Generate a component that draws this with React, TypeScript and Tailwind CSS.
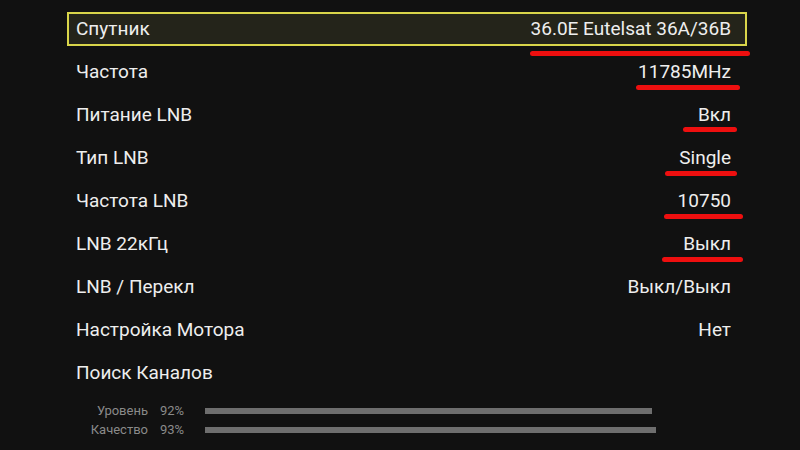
const rows = [
    { label: 'Спутник', value: '36.0E Eutelsat 36A/36B', mark: 'left-[463px] w-[220px] top-[39px]' },
    { label: 'Частота', value: '11785MHz', mark: 'left-[569px] w-[104px] top-[34px]' },
    { label: 'Питание LNB', value: 'Вкл', mark: 'left-[616px] w-[54px] top-[33px]' },
    { label: 'Тип LNB', value: 'Single', mark: 'left-[598px] w-[72px] top-[34px]' },
    { label: 'Частота LNB', value: '10750', mark: 'left-[597px] w-[79px] top-[34px]' },
    { label: 'LNB 22кГц', value: 'Выкл', mark: 'left-[595px] w-[81px] top-[34px]' },
    { label: 'LNB / Перекл', value: 'Выкл/Выкл', mark: '' },
    { label: 'Настройка Мотора', value: 'Нет', mark: '' },
    { label: 'Поиск Каналов', value: '', mark: '' },
];

const signal = [
    { label: 'Уровень', pct: '92%', bar: 'w-[447px]' },
    { label: 'Качество', pct: '93%', bar: 'w-[451px]' },
];

export default function App() {
    return (
        <div
            className="w-[800px] h-[450px] overflow-hidden bg-[#111111] text-[#eeeeee] pt-[12px]"
            style={{ fontFamily: 'Roboto, "Noto Sans", sans-serif' }}
        >
            <div className="w-[680px] ml-[67px] flex flex-col">
                {rows.map((row, i) =>
                    i === 0 ? (
                        <div key={row.label} className="relative h-[39px]">
                            <div className="h-[34px] flex items-center justify-between border-2 border-[#d9d54a] bg-[#24241a] pl-[7px] pr-[14px] text-[19px]">
                                <span>{row.label}</span>
                                <span>{row.value}</span>
                            </div>
                            <div className={`absolute h-[5px] rounded-full bg-[#ee0f0f] ${row.mark}`} />
                        </div>
                    ) : (
                        <div
                            key={row.label}
                            className="relative h-[43px] flex items-center justify-between pl-[9px] pr-[16px] text-[19px]"
                        >
                            <span>{row.label}</span>
                            <span>{row.value}</span>
                            {row.mark && (
                                <div className={`absolute h-[5px] rounded-full bg-[#ee0f0f] ${row.mark}`} />
                            )}
                        </div>
                    )
                )}
            </div>
            <div className="pt-[6px] flex flex-col text-[13px] text-[#8a8a8a]">
                {signal.map((s) => (
                    <div key={s.label} className="h-[19px] flex items-center">
                        <span className="w-[148px] text-right">{s.label}</span>
                        <span className="w-[57px] pl-[12px]">{s.pct}</span>
                        <div className={`h-[6px] bg-[#6e6e6e] ${s.bar}`} />
                    </div>
                ))}
            </div>
        </div>
    );
}
